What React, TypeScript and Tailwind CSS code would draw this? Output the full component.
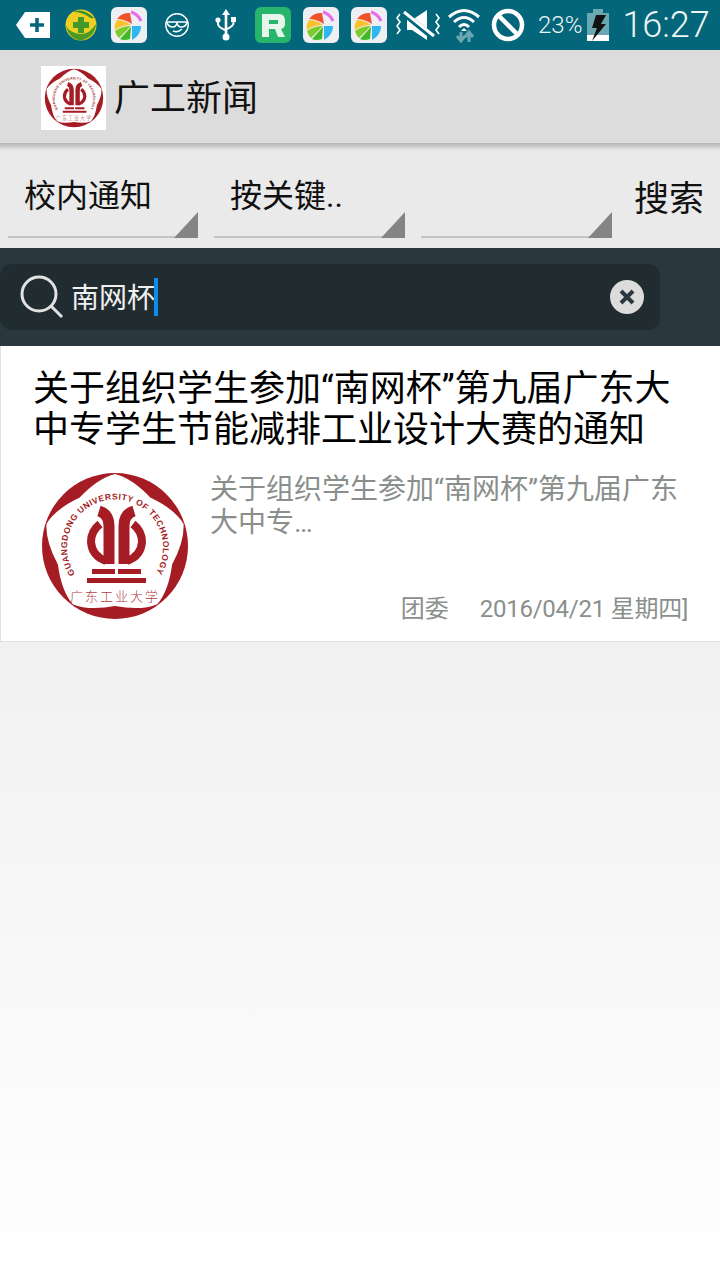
const FONT = "font-['Roboto','Noto_Sans_CJK_SC',sans-serif]";

// white five-lobed flower inside the seal, tips touch the red ring
const polar = (deg: number, r: number) => {
  const a = (deg * Math.PI) / 180;
  return `${(73 + r * Math.cos(a)).toFixed(1)} ${(75 + r * Math.sin(a)).toFixed(1)}`;
};
const flower = () => {
  let d = `M${polar(270, 72)}`;
  for (let i = 0; i < 5; i++) {
    const t = 270 + 72 * i;
    d += ` Q${polar(t + 14, 70)} ${polar(t + 36, 60)} Q${polar(t + 58, 70)} ${polar(t + 72, 72)}`;
  }
  return d + "Z";
};

// red school seal, used in the toolbar and in the list row
const Seal = ({ className }: { className: string }) => (
  <svg viewBox="0 0 146 150" className={className}>
    <circle cx="73" cy="75" r="73" fill="#a51c24" />
    <path d={flower()} fill="#fff" />
    <path id="sealText" d="M33 103 A48 48 0 1 1 113 103" fill="none" />
    <text fontFamily="Liberation Sans" fontSize="8.5" fontWeight="700" fill="#a51c24">
      <textPath href="#sealText" textLength="205">
        GUANGDONG UNIVERSITY OF TECHNOLOGY
      </textPath>
    </text>
    <g fill="none" stroke="#a51c24">
      <path d="M67 93 V55 Q67 43 57 40" strokeWidth="11" />
      <path d="M82 93 V55 Q82 43 92 40" strokeWidth="11" />
      <path d="M58 53 Q49 60 49 71 Q50 85 64 90" strokeWidth="8" />
      <path d="M91 53 Q100 60 100 71 Q99 85 85 90" strokeWidth="8" />
    </g>
    <path d="M50 98 H73 V103 H50Z M76 98 H99 V103 H76Z M45 107 H104 V112 H45Z" fill="#a51c24" />
    <text
      x="73"
      y="130"
      textAnchor="middle"
      fontFamily="Noto Sans CJK SC"
      fontSize="13"
      fontWeight="300"
      fill="#b04048"
      letterSpacing="2"
    >
      广东工业大学
    </text>
  </svg>
);

// colourful fan launcher icon in the status bar
const FanApp = () => (
  <svg viewBox="0 0 36 36" className="h-9 w-9 shrink-0">
    <rect width="36" height="36" rx="6" fill="#edeff2" />
    <path d="M6 12 Q11 5 19 6 L21 17 Q13 12 6 12Z" fill="#f0532a" />
    <path d="M6 13 Q13 13 20 18 Q11 18 4 23 Q3 17 6 13Z" fill="#f9c22d" />
    <path d="M4 24 Q11 19 20 19 L8 31 Q5 28 4 24Z" fill="#7dcb2c" />
    <path d="M9 32 L20 20 L19 32 Q13 34 9 32Z" fill="#3fba22" />
    <path d="M21 33 L21 19 L30 19 Q30 28 21 33Z" fill="#2fb5f0" />
    <path d="M20 5 Q27 7 30 14" fill="none" stroke="#e66cf0" strokeWidth="3" />
  </svg>
);

const StatusBar = () => (
  <div className="flex h-[50px] shrink-0 items-center bg-[#03667a] pl-4">
    <svg viewBox="0 0 34 26" className="h-[26px] w-[34px] shrink-0">
      <path d="M9 0 H34 V26 H9 L0 13Z" fill="#fff" />
      <path d="M21 6 V20 M14 13 H28" stroke="#03667a" strokeWidth="3.5" />
    </svg>
    <svg viewBox="0 0 32 32" className="ml-[15px] h-8 w-8 shrink-0">
      <circle cx="16" cy="16" r="15.5" fill="#efcf22" />
      <path d="M1 17 Q4 23 14 25 Q24 26 31 15 Q30 28 16 31.5 Q4 30 1 17Z" fill="#4c9a25" />
      <path d="M8 3 Q18 -2 29 9 Q26 10 24 8 Q17 3 8 3Z" fill="#3e8f2a" />
      <path d="M16 8 V24 M8 16 H24" stroke="#3f9a2a" strokeWidth="6" />
    </svg>
    <div className="ml-3.5">
      <FanApp />
    </div>
    <svg viewBox="0 0 26 24" className="ml-[17px] h-6 w-[26px] shrink-0" fill="none" stroke="#fff" strokeWidth="1.4">
      <circle cx="13" cy="12" r="11.2" />
      <path d="M2 9 H24 M3 9 Q4 14 9 14 Q12 14 13 10 Q14 14 17 14 Q22 14 23 9" />
      <path d="M9 18 Q14 20 18 16" />
    </svg>
    <svg viewBox="0 0 22 32" className="ml-[25px] h-8 w-[22px] shrink-0" fill="#fff">
      <path d="M11 0 L15 6 H12.3 V26 H9.7 V6 H7Z" />
      <circle cx="11" cy="28" r="3.5" />
      <circle cx="3" cy="11" r="2.6" />
      <rect x="16" y="8" width="5" height="5" />
      <path d="M3 12 V15 Q3 18 10 21" fill="none" stroke="#fff" strokeWidth="2" />
      <path d="M18.5 12 V14 Q18.5 17 12 20" fill="none" stroke="#fff" strokeWidth="2" />
    </svg>
    <svg viewBox="0 0 36 36" className="ml-[18px] h-9 w-9 shrink-0">
      <rect width="36" height="36" rx="6" fill="#27b56b" />
      <path d="M7 30 V7 H24 Q30 7 30 14 V17 Q30 21 26 22 L30 30 H23 L20 22 H14 V30Z M14 13 V17 H23 V13Z" fill="#e6f6ec" />
    </svg>
    <div className="ml-3">
      <FanApp />
    </div>
    <div className="ml-3">
      <FanApp />
    </div>
    <svg viewBox="0 0 46 32" className="ml-2 h-8 w-[46px] shrink-0" fill="none" stroke="#fff" strokeWidth="1.6">
      <path d="M5 5 L2 9 L5 13 L2 17 L5 21 L2 25" />
      <path d="M41 5 L44 9 L41 13 L44 17 L41 21 L44 25" />
      <path d="M12 11 H17 L32 1 V31 L17 21 H12Z" fill="#fff" stroke="none" />
      <path d="M7 3 L39 29" stroke="#03667a" strokeWidth="6" />
      <path d="M9 3 L39 27" strokeWidth="3" />
    </svg>
    <svg viewBox="0 0 34 36" className="ml-1.5 h-9 w-[34px] shrink-0" fill="none">
      <path d="M2 10 Q17 -3 32 10" stroke="#fff" strokeWidth="3" />
      <path d="M7 15 Q17 6 27 15" stroke="#fff" strokeWidth="3" />
      <path d="M12 20 Q17 15 22 20" stroke="#fff" strokeWidth="3" />
      <path d="M14 24 L17 21 L20 24Z" fill="#fff" />
      <path d="M14 25 V33 M10 29 L14 34 L18 29 M22 35 V26 M18 30 L22 25 L26 30" stroke="#6ba6b3" strokeWidth="3" />
    </svg>
    <svg viewBox="0 0 34 34" className="ml-2.5 h-[34px] w-[34px] shrink-0" fill="none" stroke="#fff" strokeWidth="4.5">
      <circle cx="17" cy="17" r="14" />
      <path d="M7 7 L27 27" />
    </svg>
    <span className="ml-[13px] text-[24px] font-light leading-none text-[#eef5f6]">23%</span>
    <div className="relative ml-[5px] h-[32px] w-[22px] shrink-0">
      <div className="absolute left-[6px] top-0 h-[4px] w-[10px] bg-[#6ba6b3]" />
      <div className="absolute left-0 top-[4px] h-[23px] w-[22px] bg-[#6ba6b3]" />
      <div className="absolute bottom-0 left-0 h-[6px] w-[22px] bg-white" />
      <svg viewBox="0 0 22 28" className="absolute left-0 top-[4px] h-7 w-[22px]">
        <path d="M9 2 H19 L14 11 H19 L5 28 L10 15 H5Z" fill="#111" />
      </svg>
    </div>
    <span className="ml-[13px] text-[36px] font-light leading-none text-[#eef5f6]">16:27</span>
  </div>
);

const Spinner = ({ label, className }: { label?: string; className: string }) => (
  <div className={`relative h-[70px] border-b-2 border-[#c4c4c4] ${className}`}>
    {label && <span className="absolute left-4 top-1.5 text-[32px] leading-[44px] text-[#111]">{label}</span>}
    <div className="absolute -bottom-0.5 right-0 h-[26px] w-6 bg-[#848484] [clip-path:polygon(100%_0,100%_100%,0_100%)]" />
  </div>
);

export default function App() {
  return (
    <div className={`${FONT} flex min-h-[1280px] w-[720px] flex-col bg-white`}>
      <StatusBar />

      {/* toolbar */}
      <div className="flex h-[93px] shrink-0 items-start bg-[#dcdcdc] pl-[41px] pt-4">
        <div className="flex h-16 w-[65px] items-center justify-center bg-white">
          <Seal className="h-[60px] w-[60px]" />
        </div>
        <span className="ml-2 text-[36px] leading-[67px] text-[#111]">广工新闻</span>
      </div>
      <div className="h-[7px] shrink-0 bg-gradient-to-b from-[#b4b4b4] to-[#e6e6e6]" />

      {/* filters */}
      <div className="flex h-[98px] shrink-0 items-start bg-[#eaeaea] pl-2 pt-[18px]">
        <Spinner label="校内通知" className="w-[190px]" />
        <Spinner label="按关键.." className="ml-4 w-[191px]" />
        <Spinner className="ml-4 w-[191px]" />
        <span className="ml-[22px] mt-2.5 text-[35px] leading-[44px] text-[#111]">搜索</span>
      </div>

      {/* search bar */}
      <div className="flex h-[98px] shrink-0 items-center bg-[#2a373f]">
        <div className="flex h-[66px] w-[660px] items-center rounded-xl bg-[#212c30] pl-5 pr-4">
          <svg viewBox="0 0 44 44" className="h-11 w-11 shrink-0" fill="none" stroke="#e2e2e2" strokeWidth="3">
            <circle cx="19" cy="19" r="17" />
            <path d="M31 31 L42 42" />
          </svg>
          <span className="ml-[7px] mt-1 text-[28px] leading-none text-[#f0f0f0]">南网杯</span>
          <div className="-ml-px h-[38px] w-1 bg-[#0a8cf0]" />
          <svg viewBox="0 0 34 34" className="ml-auto h-[34px] w-[34px] shrink-0">
            <circle cx="17" cy="17" r="17" fill="#dcdcdc" />
            <path d="M11 11 L23 23 M23 11 L11 23" stroke="#2a373f" strokeWidth="4" />
          </svg>
        </div>
      </div>

      {/* result row */}
      <div className="h-[296px] shrink-0 border-b border-l border-[#e2e2e2] bg-white pl-8 pr-[35px] pt-[23px]">
        <div className="text-[36px] leading-[41px] text-black">
          关于组织学生参加“南网杯”第九届广东大中专学生节能减排工业设计大赛的通知
        </div>
        <div className="mt-5 flex">
          <Seal className="ml-[9px] h-[150px] w-[146px] shrink-0" />
          <div className="ml-[22px] flex h-[152px] flex-1 flex-col pt-0.5">
            <div className="text-[28px] leading-[33px] text-[#8a8f8c]">
              关于组织学生参加“南网杯”第九届广东大中专…
            </div>
            <div className="mr-[-3px] mt-auto flex justify-end text-[24px] leading-[28px] text-[#8a8f8c]">
              <span>团委</span>
              <span className="ml-[31px] tracking-[-0.25px]">2016/04/21 星期四]</span>
            </div>
          </div>
        </div>
      </div>

      {/* empty list area */}
      <div className="flex-1 bg-gradient-to-b from-[#f1f1f1] to-white" />
    </div>
  );
}
